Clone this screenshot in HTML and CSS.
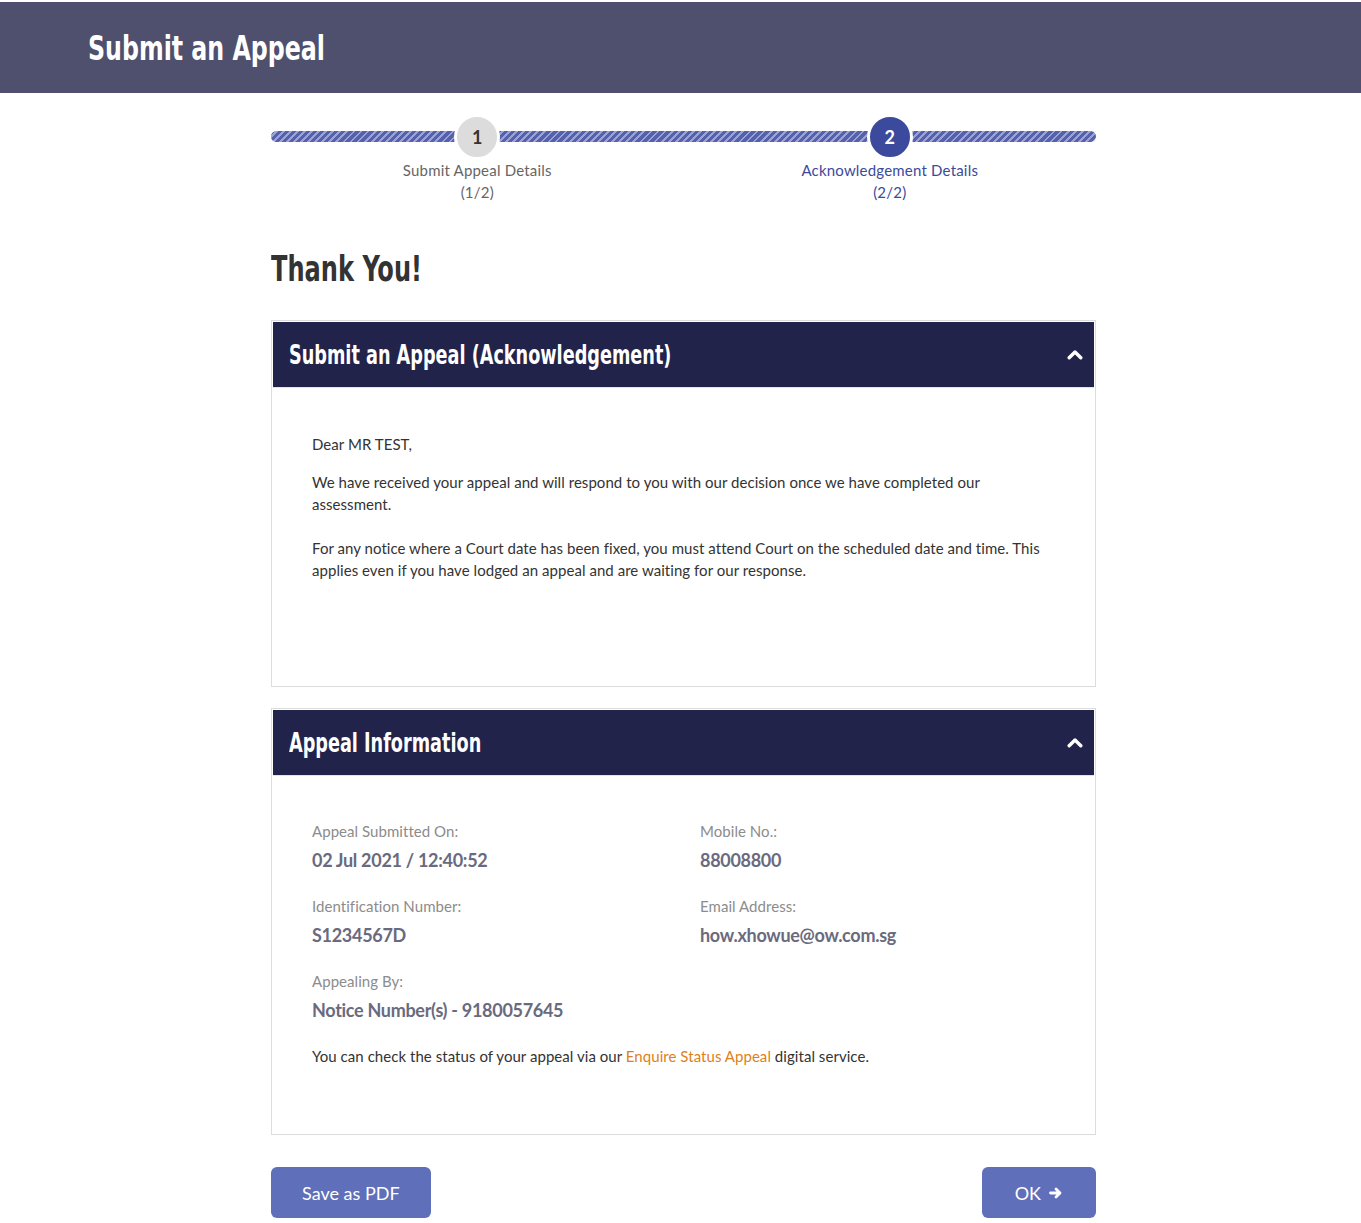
FILE: index.html
```html
<!DOCTYPE html>
<html lang="en">
<head>
<meta charset="utf-8">
<title>Submit an Appeal</title>
<link rel="stylesheet" href="styles.css">
</head>
<body>
<header class="page-header">
  <h1 class="page-title">Submit an Appeal</h1>
</header>

<main class="container">
  <div class="stepper">
    <div class="stepper-bar"></div>
    <div class="step step-done">
      <div class="step-circle">1</div>
      <div class="step-label">Submit Appeal Details<br>(1/2)</div>
    </div>
    <div class="step step-active">
      <div class="step-circle">2</div>
      <div class="step-label">Acknowledgement Details<br>(2/2)</div>
    </div>
  </div>

  <h2 class="thanks">Thank You!</h2>

  <section class="card">
    <div class="card-header">
      <h3 class="card-title">Submit an Appeal (Acknowledgement)</h3>
      <svg class="chevron" viewBox="0 0 16 11" width="16" height="11"><polyline points="2.2,8.8 8,3 13.8,8.8" fill="none" stroke="#fff" stroke-width="3.4" stroke-linecap="round" stroke-linejoin="round"/></svg>
    </div>
    <div class="card-body card-body-ack">
      <p class="p-dear">Dear MR TEST,</p>
      <p class="p-recv">We have received your appeal and will respond to you with our decision once we have completed our assessment.</p>
      <p class="p-court">For any notice where a Court date has been fixed, you must attend Court on the scheduled date and time. This applies even if you have lodged an appeal and are waiting for our response.</p>
    </div>
  </section>

  <section class="card card-info">
    <div class="card-header">
      <h3 class="card-title">Appeal Information</h3>
      <svg class="chevron" viewBox="0 0 16 11" width="16" height="11"><polyline points="2.2,8.8 8,3 13.8,8.8" fill="none" stroke="#fff" stroke-width="3.4" stroke-linecap="round" stroke-linejoin="round"/></svg>
    </div>
    <div class="card-body card-body-info">
      <div class="info-grid">
        <div class="field">
          <div class="field-label">Appeal Submitted On:</div>
          <div class="field-value">02 Jul 2021 / 12:40:52</div>
        </div>
        <div class="field">
          <div class="field-label">Mobile No.:</div>
          <div class="field-value">88008800</div>
        </div>
        <div class="field">
          <div class="field-label">Identification Number:</div>
          <div class="field-value">S1234567D</div>
        </div>
        <div class="field">
          <div class="field-label">Email Address:</div>
          <div class="field-value">how.xhowue@ow.com.sg</div>
        </div>
        <div class="field">
          <div class="field-label">Appealing By:</div>
          <div class="field-value">Notice Number(s) - 9180057645</div>
        </div>
      </div>
      <p class="status-note">You can check the status of your appeal via our <a class="link" href="#">Enquire Status Appeal</a> digital service.</p>
    </div>
  </section>

  <div class="actions">
    <button class="btn btn-pdf" type="button">Save as PDF</button>
    <button class="btn btn-ok" type="button">OK
      <svg class="arrow" viewBox="0 0 14 12" width="14" height="12"><path d="M1.5 6h9M7 2l4 4-4 4" fill="none" stroke="#fff" stroke-width="2.8" stroke-linecap="round" stroke-linejoin="round"/></svg>
    </button>
  </div>
</main>
</body>
</html>
```
FILE: styles.css
```css
* { box-sizing: border-box; }

body {
  margin: 0;
  padding-top: 2px;
  background: #fff;
  font-family: Lato, "Open Sans", Arial, sans-serif;
  color: #333;
  font-size: 15px;
  letter-spacing: 0.05px;
}

.page-header {
  background: #4f506e;
  height: 91px;
  display: flex;
  align-items: center;
  padding-left: 88px;
}

.page-title,
.thanks,
.card-title {
  font-family: "Liberation Sans Narrow", "DejaVu Sans Condensed", "Arial Narrow", sans-serif;
  font-weight: 700;
  letter-spacing: 0;
  display: inline-block;
  white-space: nowrap;
  transform-origin: left center;
}

.page-title {
  margin: 0;
  color: #fff;
  font-size: 34px;
  transform: scaleX(0.775);
}

.container {
  width: 825px;
  margin-left: calc(50% - 409.5px);
  padding-bottom: 20px;
}

/* Stepper */
.stepper {
  position: relative;
  display: grid;
  grid-template-columns: 1fr 1fr;
  padding-top: 24px;
}

.stepper-bar {
  position: absolute;
  left: 0;
  right: 0;
  top: 38px;
  height: 11px;
  border-radius: 6px;
  background: repeating-linear-gradient(135deg, #5561ad 0, #5561ad 3px, #9aa3d4 3px, #9aa3d4 5px);
}

.step {
  position: relative;
  display: flex;
  flex-direction: column;
  align-items: center;
}

.step-circle {
  width: 46px;
  height: 46px;
  margin-top: -3px;
  border-radius: 50%;
  border: 3px solid #fff;
  display: flex;
  align-items: center;
  justify-content: center;
  font-size: 18px;
  font-weight: 700;
}

.step-done .step-circle { background: #dcdcdc; color: #333; }
.step-active .step-circle { background: #3b4a9c; color: #fff; }

.step-label {
  margin-top: -1px;
  text-align: center;
  line-height: 22px;
  font-size: 15px;
  letter-spacing: 0.2px;
}

.step-done .step-label { color: #666; }
.step-active .step-label { color: #3b4a9c; }

.thanks {
  display: block;
  margin: 46px 0 31px;
  font-size: 35px;
  line-height: 40px;
  color: #333;
  transform: scaleX(0.765);
}

/* Cards */
.card {
  border: 1px solid #dcdcdc;
  padding: 1px;
  background: #fff;
}

.card-info { margin-top: 21px; }

.card-header {
  background: #22234a;
  height: 65px;
  display: flex;
  align-items: center;
  justify-content: space-between;
  padding: 0 11px 0 16px;
}

.card-title {
  margin: 0;
  color: #fff;
  font-size: 26px;
  transform: scaleX(0.755);
}

.chevron { display: block; }

.card-body {
  border-top: 1px solid #e4e4e4;
  padding: 45px 39px 0;
}

.card-body-ack { height: 298px; }
.card-body-info { height: 358px; padding-top: 44px; }

.card-body p {
  margin: 0;
  line-height: 22px;
}

.p-recv { margin-top: 16px !important; }
.p-court { margin-top: 22px !important; }

.info-grid {
  display: grid;
  grid-template-columns: 388px 1fr;
  row-gap: 23px;
}

.field-label {
  color: #8c8c8c;
  font-size: 15px;
  line-height: 22px;
}

.field-value {
  margin-top: 6px;
  color: #6a6a7e;
  font-size: 18px;
  font-weight: 700;
  line-height: 24px;
  letter-spacing: -0.3px;
}

.status-note {
  margin-top: 23px !important;
}

.link {
  color: #e07f1a;
  text-decoration: none;
}

/* Actions */
.actions {
  margin-top: 32px;
  display: flex;
  justify-content: space-between;
}

.btn {
  height: 51px;
  border: none;
  border-radius: 6px;
  background: #5f6fba;
  color: #fff;
  font-family: Lato, "Open Sans", Arial, sans-serif;
  font-size: 18px;
  display: inline-flex;
  align-items: center;
  gap: 8px;
}

.btn-pdf { padding: 0 31px; }
.btn-ok { padding: 0 33px; }
.arrow { display: block; }
```
